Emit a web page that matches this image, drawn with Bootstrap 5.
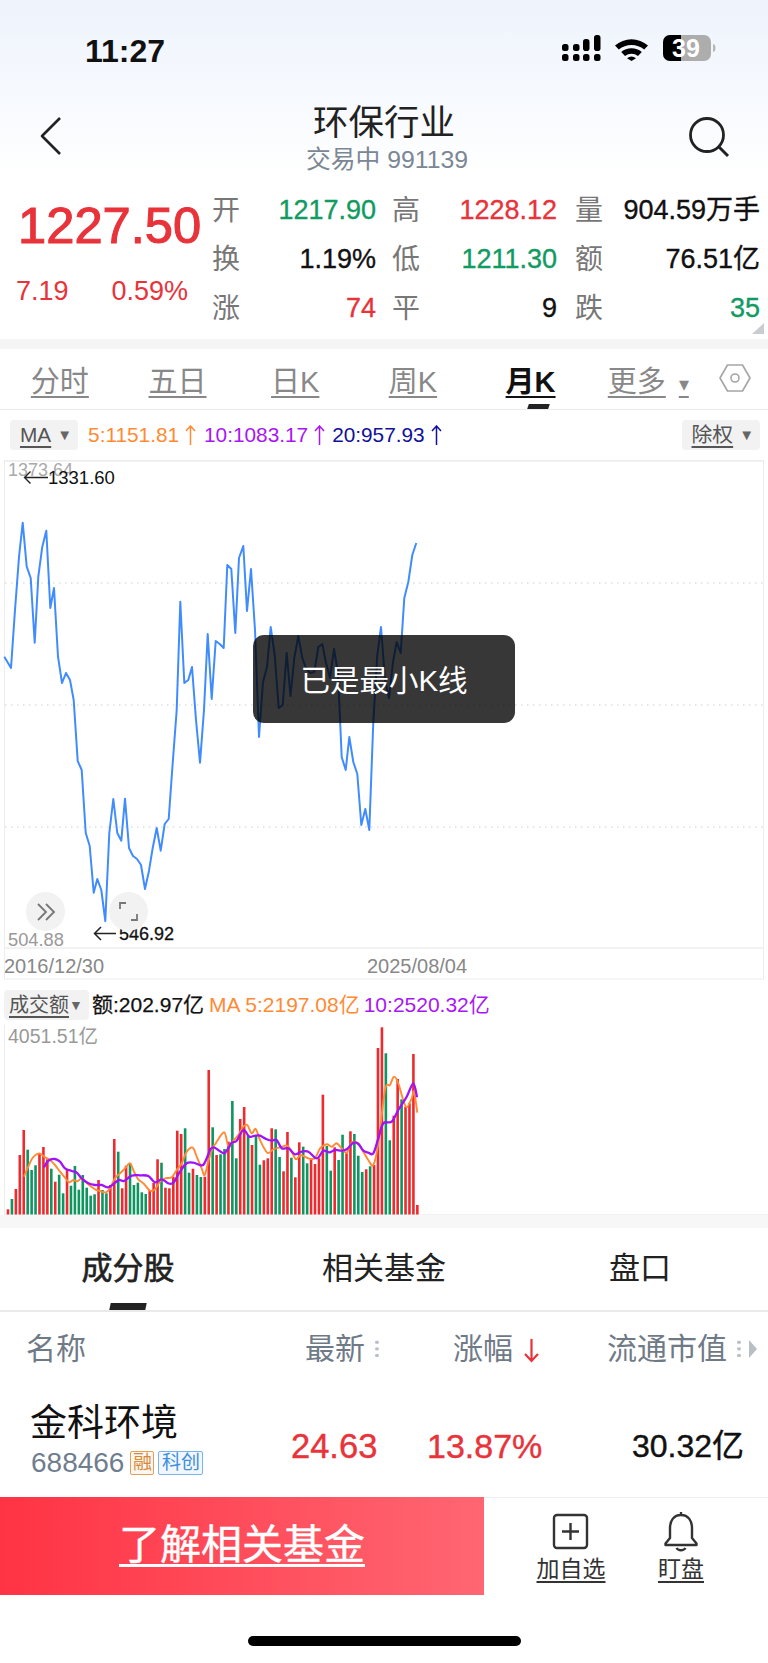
<!DOCTYPE html>
<html lang="zh">
<head>
<meta charset="utf-8">
<title>环保行业</title>
<link href="https://cdn.jsdelivr.net/npm/bootstrap@5.3.0/dist/css/bootstrap.min.css" rel="stylesheet">
<style>
html,body{margin:0;height:1663px;overflow:hidden;background:#fff}
body{font-family:"Liberation Sans","Noto Sans CJK SC",sans-serif;color:#111}
.u{text-decoration:underline;text-underline-offset:4px;text-decoration-thickness:1.5px}
.red{color:#e8333a}.grn{color:#129a63}
.med{-webkit-text-stroke:.35px currentColor}
.pg-head{height:186px;background:linear-gradient(180deg,#eef3fc 0,#f6f9fe 90px,#fff 175px)}
.stat{height:94px;padding:34px 52px 0 85px}
.clock{font-size:32px;line-height:34px;font-weight:700}
.nav-row{height:92px;padding:0 38px}
.nav-side{width:42px}
.nav-ic{margin-top:22px}
.nav-ttl{font-size:35.500px;line-height:42px;color:#222;margin-top:8px}
.nav-sub{font-size:24.800px;line-height:30px;color:#7b8794;margin:1px 0 0 6px}
.quote{height:153px}
.q-left{width:212px;padding-left:16px}
.q-price{font-size:50.700px;line-height:60px;margin-top:10px;padding-left:2px;color:#e8333a;-webkit-text-stroke:1.100px #e8333a}
.q-sub{font-size:27px;line-height:30px;margin-top:20px;width:172px}
.q-grid{display:grid;grid-template-columns:28px 136px 44px 137px 46px 157px;grid-auto-rows:49px;align-items:center;font-size:27px;line-height:49px}
.q-lab{color:#777;text-align:right;font-size:28px}
.q-val{text-align:right}
.corner{right:4px;bottom:5px;width:0;height:0;border-left:12px solid transparent;border-bottom:11px solid #c9cdd2}
.band{background:#f5f5f5}
.band-a{height:10px}.band-b{height:13px;background:#f7f7f7}
.kt{height:61px;border-bottom:1.5px solid #eaeaf0}
.kt-grid{display:grid;grid-template-columns:repeat(6,117.7px);margin-left:1px;font-size:29px;line-height:66px;color:#888;text-align:center}
.kt-on{color:#111;font-weight:700}
.kt-more{font-size:20px;margin-left:13px;vertical-align:1px}
.kt-mark{left:528px;bottom:0;width:21px;height:5px;background:#222;transform:skewX(-18deg)}
.kt-hex{margin:14px 0 0 12px}
.ma{height:50px;padding:10px 8px 0 10px;font-size:20.800px;line-height:30px}
.drop{background:#f2f2f2;border-radius:4px;height:30px;padding:0 6px 0 10px;color:#555;font-size:20.800px;line-height:30px}
.drop-btn{color:#666;font-size:15px;margin-left:6px;vertical-align:2px}
.ma5{color:#ff8a33;margin-left:10px}.ma10{color:#a916f5;margin-left:8px}.ma20{color:#10109a;margin-left:7px}
.up-arr{margin:5px 0 0 6px;flex:none}
.wrap-k{height:520px}
svg{display:block}
svg text{font-family:"Liberation Sans","Noto Sans CJK SC",sans-serif}
.toast-box{left:253px;top:175px;width:262px;height:88px;background:rgba(0,0,0,.785);border-radius:11px;color:#fff;font-size:29.500px;line-height:92px;text-align:center}
.fab{width:39px;height:39px;border-radius:50%;background:#f2f2f2;top:432px}
.fab-a{left:26px}.fab-b{left:109px}
.v-head{height:45px;padding:10px 0 0 4px;font-size:21px;line-height:30px}
.v-drop{background:#f2f2f2;border-radius:4px;width:85px;padding-left:5px;color:#555;height:30px;font-size:20px}
.v-arr{font-size:14px;color:#666;vertical-align:2px}
.v-a{margin-left:3px;color:#111;-webkit-text-stroke:.25px #111}
.v-b{margin-left:5px;color:#ff8a33}.v-c{margin-left:4px;color:#a916f5}
.wrap-v{height:190px}
.s-tabs{height:84px;border-bottom:2px solid #eaeaea;font-size:31px;line-height:82px;color:#222}
.s-tab{width:256px;text-align:center}
.s-tab-a{-webkit-text-stroke:.6px #222}
.s-mark{left:110px;bottom:0;width:36px;height:7px;background:#222;transform:skewX(-12deg)}
.t-head{height:73px;display:grid;grid-template-columns:305px 148px 154px 161px;font-size:30px;line-height:73px;color:#6f7a87}
.t-first{padding-left:26px}
.t-dots{width:4px;height:20px;margin:27px 0 0 10px;background:radial-gradient(circle,#b8bec6 1.6px,transparent 2px) 0 0/4px 6.6px}
.t-down{margin:25px 0 0 10px}
.t-tri{margin:27px 0 0 7px}
.t-row{height:112px;display:grid;grid-template-columns:291px 136px 205px 136px}
.t-cell{padding:16px 0 0 31px}
.t-name{font-size:37px;line-height:46px;color:#111;margin-left:-1px}
.t-code-row{margin-top:1px;height:30px}
.t-code{font-size:28px;line-height:30px;color:#6f7e8f}
.tag{height:24px;border-radius:2px;font-size:19px;line-height:22px;text-align:center}
.tag-o{margin-left:6px;width:24px;border:1px solid #e0a05e;color:#d68a3c;background:#fdf6ee}
.tag-b{margin-left:4px;width:45px;border:1px solid #7cb3e8;color:#3e8ede;background:#f1f7fd}
.t-num{padding-top:41px;font-size:34.500px;line-height:40px;-webkit-text-stroke:.4px currentColor}
.t-num-p{font-size:34px}
.t-num-s{font-size:32px}
.b-bar{height:98px}
.b-red{width:484px;background:linear-gradient(90deg,#ff3344,#ff6672);color:#fff;font-size:41px;line-height:96px;text-align:center;-webkit-text-stroke:.4px #fff}
.b-red .u{text-underline-offset:5px;text-decoration-thickness:3px}
.b-act{flex:1;border-top:1px solid #efefef;color:#333;font-size:23px;padding:13px 0 0 32px}
.act{width:110px}
.act-ic{height:43px}
.act-lab{line-height:30px}
.home{width:273px;height:10px;border-radius:5px;background:#000;margin:41px 0 0 248px}
</style>
</head>
<body>
<div class="pg-head">
  <div class="stat d-flex justify-content-between align-items-start">
    <div class="clock">11:27</div>
    <svg width="155" height="30" viewBox="561 37 155 30" role="img" aria-label="状态">
      <g fill="#000">
        <rect x="562" y="47" width="6.500" height="7" rx="2.500"/><rect x="573" y="47" width="6.500" height="7" rx="2.500"/>
        <rect x="583" y="42" width="6.500" height="12" rx="2.800"/><rect x="594" y="38" width="6.500" height="16" rx="2.800"/>
        <rect x="562" y="57" width="6.500" height="7" rx="2.500"/><rect x="573" y="57" width="6.500" height="7" rx="2.500"/>
        <rect x="583" y="57" width="6.500" height="7" rx="2.500"/><rect x="594" y="57" width="6.500" height="7" rx="2.500"/>
      </g>
      <path d="M615 48.500a25 25 0 0 1 33 0l-3.800 4a20 20 0 0 0-25.400 0zM621.200 55a16 16 0 0 1 20.600 0l-3.800 4a10.500 10.500 0 0 0-13 0zM627 61.200a7.500 7.500 0 0 1 9 0l-4.500 2.800z" fill="#000"/>
      <rect x="663" y="38" width="48" height="26" rx="7" fill="#adadad"/>
      <path d="M670 38h11v26h-11a7 7 0 0 1-7-7V45a7 7 0 0 1 7-7z" fill="#000"/>
      <path d="M713 47v8a3 4 0 0 0 2.500-4 3 4 0 0 0-2.500-4z" fill="#b5b5b5"/>
      <text x="686" y="60" font-size="25" font-weight="700" fill="#fff" text-anchor="middle">39</text>
    </svg>
  </div>
  <div class="nav-row d-flex justify-content-between align-items-start">
    <div class="nav-side"><svg class="nav-ic" width="26" height="40" viewBox="0 0 26 40" aria-hidden="true"><path d="M22 2 4 20l18 18" fill="none" stroke="#222" stroke-width="2.600" stroke-linejoin="round"/></svg></div>
    <div class="text-center">
      <div class="nav-ttl">环保行业</div>
      <div class="nav-sub">交易中 991139</div>
    </div>
    <div class="nav-side"><svg class="nav-ic" width="42" height="42" viewBox="0 0 42 42" aria-hidden="true"><circle cx="19" cy="19" r="16.500" fill="none" stroke="#222" stroke-width="2.800"/><path d="M31 31l9 9" stroke="#222" stroke-width="3" fill="none"/></svg></div>
  </div>
</div>

<div class="quote d-flex position-relative">
  <div class="q-left">
    <div class="q-price">1227.50</div>
    <div class="q-sub red d-flex justify-content-between"><span>7.19</span><span>0.59%</span></div>
  </div>
  <div class="q-grid">
    <div class="q-lab">开</div><div class="q-val grn med">1217.90</div>
    <div class="q-lab">高</div><div class="q-val red med">1228.12</div>
    <div class="q-lab">量</div><div class="q-val med">904.59万手</div>
    <div class="q-lab">换</div><div class="q-val med">1.19%</div>
    <div class="q-lab">低</div><div class="q-val grn med">1211.30</div>
    <div class="q-lab">额</div><div class="q-val med">76.51亿</div>
    <div class="q-lab">涨</div><div class="q-val red med">74</div>
    <div class="q-lab">平</div><div class="q-val med">9</div>
    <div class="q-lab">跌</div><div class="q-val grn med">35</div>
  </div>
  <div class="corner position-absolute"></div>
</div>
<div class="band band-a"></div>

<div class="kt d-flex align-items-start position-relative">
  <div class="kt-grid">
    <div><span class="u">分时</span></div>
    <div><span class="u">五日</span></div>
    <div><span class="u">日K</span></div>
    <div><span class="u">周K</span></div>
    <div><span class="u kt-on">月K</span></div>
    <div><span class="u">更多<span class="kt-more">▾</span></span></div>
  </div>
  <div class="kt-mark position-absolute"></div>
  <svg class="kt-hex" width="32" height="30" viewBox="0 0 32 30" aria-hidden="true"><path d="M8.500 2h15L31 15l-7.500 13h-15L1 15z" fill="none" stroke="#a5a5a5" stroke-width="1.600" stroke-linejoin="round"/><circle cx="16" cy="15" r="4" fill="none" stroke="#a5a5a5" stroke-width="1.600"/></svg>
</div>

<div class="ma d-flex align-items-start">
  <div class="drop"><span class="u">MA</span><span class="drop-btn">▼</span></div>
  <span class="ma5">5:1151.81</span><svg class="up-arr" width="11" height="20" viewBox="0 0 11 20" aria-hidden="true"><path d="M5.500 20V1M1 6l4.500-5L10 6" fill="none" stroke="#ff8a33" stroke-width="1.500"/></svg>
  <span class="ma10">10:1083.17</span><svg class="up-arr" width="11" height="20" viewBox="0 0 11 20" aria-hidden="true"><path d="M5.500 20V1M1 6l4.500-5L10 6" fill="none" stroke="#a916f5" stroke-width="1.500"/></svg>
  <span class="ma20">20:957.93</span><svg class="up-arr" width="11" height="20" viewBox="0 0 11 20" aria-hidden="true"><path d="M5.500 20V1M1 6l4.500-5L10 6" fill="none" stroke="#10109a" stroke-width="1.500"/></svg>
  <div class="drop ms-auto"><span class="u">除权</span><span class="drop-btn">▼</span></div>
</div>

<div class="wrap-k position-relative">
  <svg id="kline" width="768" height="520" viewBox="0 460 768 520" role="img" aria-label="月K走势图"></svg>
  <div class="toast-box position-absolute">已是最小K线</div>
  <div class="fab fab-a position-absolute d-flex align-items-center justify-content-center"><svg width="20" height="18" viewBox="0 0 20 18" aria-hidden="true"><path d="M2 1l8 8-8 8M10 1l8 8-8 8" fill="none" stroke="#777" stroke-width="1.800"/></svg></div>
  <div class="fab fab-b position-absolute d-flex align-items-center justify-content-center"><svg width="19" height="19" viewBox="0 0 19 19" aria-hidden="true"><path d="M1 7V1h6M18 12v6h-6" fill="none" stroke="#777" stroke-width="1.800"/></svg></div>
</div>

<div class="v-head d-flex align-items-start">
  <div class="v-drop"><span class="u">成交额</span><span class="v-arr">▼</span></div>
  <div class="v-a">额:202.97亿</div><div class="v-b">MA 5:2197.08亿</div><div class="v-c">10:2520.32亿</div>
</div>
<div class="wrap-v">
  <svg id="vol" width="768" height="190" viewBox="0 1025 768 190" role="img" aria-label="成交额柱状图"></svg>
</div>
<div class="band band-b"></div>

<div class="s-tabs d-flex position-relative">
  <div class="s-tab s-tab-a">成分股</div><div class="s-tab">相关基金</div><div class="s-tab">盘口</div>
  <div class="s-mark position-absolute"></div>
</div>

<div class="t-head">
  <div class="t-first">名称</div>
  <div class="d-flex align-items-start"><span>最新</span><i class="t-dots"></i></div>
  <div class="d-flex align-items-start"><span>涨幅</span><svg class="t-down" width="17" height="27" viewBox="0 0 17 27" aria-hidden="true"><path d="M8.500 2v22M2 17l6.500 7 6.500-7" fill="none" stroke="#e8333a" stroke-width="2.200"/></svg></div>
  <div class="d-flex align-items-start"><span>流通市值</span><i class="t-dots"></i><svg class="t-tri" width="10" height="20" viewBox="0 0 10 20" aria-hidden="true"><path d="M1 1l8 9-8 9z" fill="#b8bec6"/></svg></div>
</div>
<div class="t-row">
  <div class="t-cell">
    <div class="t-name">金科环境</div>
    <div class="t-code-row d-flex align-items-center">
      <span class="t-code">688466</span>
      <span class="tag tag-o">融</span>
      <span class="tag tag-b">科创</span>
    </div>
  </div>
  <div class="t-num red">24.63</div>
  <div class="t-num t-num-p red">13.87%</div>
  <div class="t-num t-num-s">30.32亿</div>
</div>

<div class="b-bar d-flex">
  <div class="b-red"><span class="u">了解相关基金</span></div>
  <div class="b-act d-flex">
    <div class="act d-flex flex-column align-items-center">
      <div class="act-ic d-flex align-items-end pb-1"><svg width="38" height="37" viewBox="0 0 38 37" aria-hidden="true"><rect x="2" y="2" width="33" height="33" rx="3" fill="none" stroke="#333" stroke-width="2.400"/><path d="M18.500 10v17M10 18.500h17" stroke="#333" stroke-width="2.400" fill="none"/></svg></div>
      <div class="act-lab"><span class="u">加自选</span></div>
    </div>
    <div class="act d-flex flex-column align-items-center">
      <div class="act-ic"><svg width="36" height="42" viewBox="0 0 36 42" aria-hidden="true"><path d="M18 4c-7.500 0-11 6-11 13v10l-4.500 5.500v1.500h31v-1.500L29 27V17c0-7-3.500-13-11-13zM18 1v3M13.500 37a5 4 0 0 0 9 0" fill="none" stroke="#333" stroke-width="2.400" stroke-linejoin="round"/></svg></div>
      <div class="act-lab"><span class="u">盯盘</span></div>
    </div>
  </div>
</div>
<div class="home"></div>

<script src="https://cdn.jsdelivr.net/npm/bootstrap@5.3.0/dist/js/bootstrap.bundle.min.js"></script>
<script>
const line="4.3,656.7 11,668 15,610 19,557 22.7,522.7 26.7,566.7 30.7,578 34.7,642.7 38.3,576.7 42.3,546.7 46.3,530.7 50.3,608 54,588 58,656.7 62,683 66,673 70,680 73.7,700 77.7,761 81.7,770 85.7,832.7 89.7,846 93.7,892.7 97.3,879 101.3,890 105.3,921 109.3,833 113.3,799 117.3,833 121.3,840.7 125,798.7 129,848 133,856 137,859 141,865 145,889 149,870.7 152.7,848 156.7,828 160.7,850.7 164.7,824 168.7,819 172.7,763 176.7,710 180.3,601.7 184.3,683 188.3,680 192,667 196,720 200,762.7 204,710 207.7,634 211.7,699 215.7,641 219.7,644 223.7,648 227.3,565 231.3,569 235.3,633 239,558 243.3,546 247,611 251,569 255,630 259,737 263,682 267,667 270.7,627 274.7,655 278.7,708 282.7,705 286.7,653 290.5,696 294.3,658 298.3,636 302.3,658 306.3,669 310.3,673 314.3,672 318.3,647 322.3,644 326,663 330,678 334,649 338,673 341.7,757 345.7,770 349.3,737 353.3,762 357.3,774 361.3,825 365.3,809 369.3,830 373.3,722 377.3,655 381,627 385,680 389,698 393,662 396.7,642 400.7,653 404.3,598 408.3,582 412.3,555 416.3,543";
let k='';
k+='<rect x="4.500" y="461" width="759" height="518" fill="none" stroke="#ededed" stroke-width="1"/><path d="M4 460.500h760" stroke="#ededed" stroke-width="2"/><path d="M4 948h760" stroke="#eeeeee" stroke-width="1.500"/>';
[583,705,827].forEach(y=>k+=`<path d="M5 ${y}h758" stroke="#dfdfdf" stroke-width="1.500" stroke-dasharray="1.500 4.500"/>`);
k+='<text x="8" y="476" font-size="18" fill="#aaa">1373.64</text>';
k+='<path d="M48 477.500H24.500M30.500 471.500l-6 6 6 6" fill="none" stroke="#222" stroke-width="1.400"/>';
k+='<text x="48" y="484" font-size="18.500" fill="#111">1331.60</text>';
k+='<text x="8" y="946" font-size="18.300" fill="#999">504.88</text>';
k+='<path d="M116 933.500H95M101 927l-6.500 6.500 6.500 6.500" fill="none" stroke="#222" stroke-width="1.500"/>';
k+='<text x="119" y="940" font-size="18" fill="#111" stroke="#111" stroke-width=".3">546.92</text>';
k+='<text x="4" y="973" font-size="20" fill="#888">2016/12/30</text>';
k+='<text x="367" y="973" font-size="20" fill="#888">2025/08/04</text>';
k+=`<polyline points="${line}" fill="none" stroke="#408cff" stroke-width="2" stroke-linejoin="round"/>`;
document.getElementById('kline').innerHTML=k;

const tops=[568,537,507,405,330,389,450,436,400,381,418,446,485,464,520,450,497,438,509,465,503,527,523,480,510,520,495,357,395,505,437,430,495,488,517,522,510,489,418,428,503,505,470,332,342,325,458,446,465,471,470,150,322,405,403,387,365,243,415,297,261,345,375,345,434,421,415,325,328,411,454,336,413,472,367,380,430,414,432,415,224,378,452,382,420,344,400,334,342,407,456,448,439,435,84,22,100,361,287,177,238,260,250,102,555];
const greens=new Set([1,5,6,7,11,13,14,16,17,18,19,20,21,22,24,25,28,31,32,33,34,35,39,45,46,48,49,52,54,55,57,58,61,63,64,68,69,72,75,76,81,82,84,85,88,89,90,92,96,97,100]);
let v='<path d="M4.500 1025v190" stroke="#ededed" stroke-width="1"/><path d="M4 1214.700h764" stroke="#efefef" stroke-width="1"/>';
v+='<text x="8" y="1043" font-size="19.500" fill="#999">4051.51亿</text>';
tops.forEach((t,i)=>{const x=8+3.936*i-1.3,y=1020+t/3;v+=`<rect x="${x.toFixed(2)}" y="${y.toFixed(1)}" width="2.600" height="${(1214.5-y).toFixed(1)}" fill="${greens.has(i)?'#0f9660':'#ee2a2e'}"/>`});
const conv=(a,off)=>a.map(p=>[(p[0]+off)/3,1020+p[1]/3]);
const oA=[[72,470],[85,440],[97,415],[110,403],[120,401],[135,412],[150,420],[165,435],[180,455],[195,473],[207,487],[220,480],[232,484],[245,475],[258,487],[270,497],[285,508],[300,513],[318,517],[330,505],[345,475],[360,460],[375,445],[390,430],[402,455],[415,478],[430,490],[450,512],[465,508],[480,485],[495,475],[515,472],[530,450],[545,430],[560,395],[578,383],[590,410],[605,445],[614,465],[626,420],[640,380],[648,370]];
const oB=[[20,365],[43,337],[55,378],[70,362],[85,345],[100,320],[112,315],[125,340],[137,327],[150,360],[172,398],[190,388],[210,382],[232,377],[245,395],[258,418],[272,405],[295,415],[315,415],[330,385],[350,373],[365,380],[380,370],[395,385],[410,398],[425,368],[445,370],[460,395],[475,420],[490,435],[505,370],[525,210],[540,195],[552,170],[565,190],[578,235],[590,262],[605,235],[612,215],[622,278]];
const pA=[[132,442],[145,422],[165,417],[180,425],[195,445],[215,453],[230,458],[245,475],[265,490],[285,495],[305,495],[325,502],[345,488],[358,480],[372,483],[395,467],[420,466],[445,468],[465,487],[485,478],[505,490],[520,488],[540,455],[560,430],[580,428],[600,435],[612,432],[630,390]];
const pB=[[0,388],[12,382],[28,392],[43,400],[55,385],[65,368],[80,362],[100,330],[118,350],[135,347],[150,347],[170,358],[187,362],[200,360],[215,385],[235,385],[255,403],[275,395],[295,395],[315,413],[325,413],[340,392],[358,397],[375,390],[395,392],[410,388],[430,368],[445,372],[460,392],[475,398],[490,400],[505,355],[520,310],[545,305],[565,270],[590,230],[610,190],[621,232]];
const smooth=pts=>{let d=`M${pts[0][0].toFixed(1)} ${pts[0][1].toFixed(1)}`;for(let i=0;i<pts.length-1;i++){const p0=pts[i-1]||pts[i],p1=pts[i],p2=pts[i+1],p3=pts[i+2]||p2;d+=`C${(p1[0]+(p2[0]-p0[0])/6).toFixed(1)} ${(p1[1]+(p2[1]-p0[1])/6).toFixed(1)} ${(p2[0]-(p3[0]-p1[0])/6).toFixed(1)} ${(p2[1]-(p3[1]-p1[1])/6).toFixed(1)} ${p2[0].toFixed(1)} ${p2[1].toFixed(1)}`}return d};
v+=`<path d="${smooth(conv(oA,0).concat(conv(oB,630)))}" fill="none" stroke="#ff8a33" stroke-width="1.900"/>`;
v+=`<path d="${smooth(conv(pA,0).concat(conv(pB,630)))}" fill="none" stroke="#a012f8" stroke-width="2.300"/>`;
document.getElementById('vol').innerHTML=v;
</script>
</body>
</html>
